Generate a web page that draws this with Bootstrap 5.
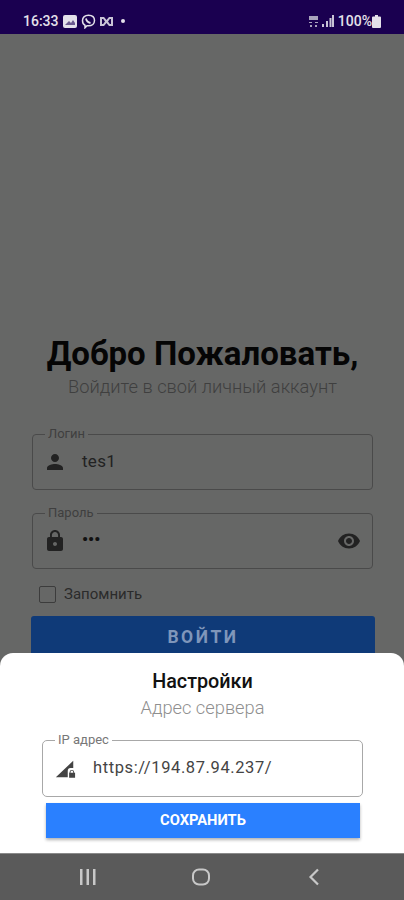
<!DOCTYPE html>
<html lang="ru">

<head>
    <meta charset="UTF-8" />
    <meta name="viewport" content="width=device-width, initial-scale=1.0" />
    <title>Настройки</title>
    <link href="https://cdn.jsdelivr.net/npm/bootstrap@5.3.0/dist/css/bootstrap.min.css" rel="stylesheet" />
    <style>
        body { font-family: Roboto, "Liberation Sans", sans-serif; background: #666766; overflow: hidden; }
        .phone { height: 900px; }
        .status-bar { height: 34px; background: #1a0050; color: #e4e1ea; font-size: 14px; font-weight: 500; padding: 8px 21px 0 23px; }
        .status-bar svg { display: block; }
        .status-right { margin-right: 2px; }
        .status-dot { margin-left: 8px; }
        .screen { background: #666766; min-height: 0; overflow: hidden; }
        .login-form { padding: 302px 31px 0 32px; }
        .login-title { font-size: 33px; font-weight: 700; color: #050505; line-height: 36px; margin: 0 -10px; white-space: nowrap; }
        .login-sub { font-size: 18.3px; font-weight: 300; color: #3f3f3f; line-height: 22px; margin: 4px 0 0; white-space: nowrap; }
        .outlined { border: 1px solid #4a4a4a; border-radius: 4px; padding: 0 11px 0 13px; margin: 0; min-width: 0; }
        .outlined legend { float: none; width: auto; font-size: 13px; line-height: 6px; height: 6px; padding: 0 3px; margin: 0 0 0 -1px; color: #3f3f3f; }
        .login-form .outlined { height: 59px; }
        .login-form .outlined + .outlined { margin-top: 20px; }
        .field-row { height: 50px; font-size: 17px; color: #222; }
        .field-text { margin-left: 15px; letter-spacing: .3px; }
        .pw-dots { font-size: 17px; line-height: 1; letter-spacing: 0; margin-left: 15px; margin-top: -3px; color: #111; font-weight: 700; }
        .remember { margin: 16px 0 0 7px; height: 18px; color: #2b2b2b; font-size: 15px; }
        .fake-check { width: 17px; height: 17px; border: 1.5px solid #3c3c3c; border-radius: 2px; margin-right: 8px; }
        .remember-label { padding-top: 1px; }
        .login-btn { display: block; width: 344px; height: 52px; margin: 13px 0 0 -1px; background: #0f3a78; color: #7f96ba; border: 0; border-radius: 3px; font-size: 17.5px; font-weight: 700; letter-spacing: 2.5px; padding: 0 0 9px; }
        .sheet { position: absolute; left: 0; right: 0; bottom: 0; height: 200px; background: #fff; border-radius: 13px 13px 0 0; padding: 18px 41px 0 42px; text-align: center; }
        .sheet-title { font-size: 19.8px; font-weight: 500; color: #111; line-height: 22px; margin: 0; }
        .sheet-sub { font-size: 18.3px; font-weight: 300; color: #8f8f8f; line-height: 22px; margin: 4px 0 0; }
        .sheet .outlined { border-color: #a8a8a8; border-radius: 5px; height: 60px; margin-top: 18px; padding-left: 13px; text-align: left; }
        .sheet .outlined legend { color: #777; }
        .sheet .field-row { height: 51px; color: #444; font-size: 16.5px; }
        .sheet .field-text { margin-left: 17px; letter-spacing: .6px; }
        .save-btn { display: block; width: 314px; height: 35px; margin: 6px 0 0 4px; background: #2a80ff; color: #fff; border: 0; border-radius: 0; font-size: 14.7px; font-weight: 700; padding: 0; box-shadow: 0 2px 3px rgba(0, 0, 0, .3); }
        .nav-bar { height: 47px; background: #5a5a5a; border-top: 1px solid #8a8a8a; flex-shrink: 0; padding: 0 84px 0 79px; }
        .nav-home { margin-left: -4px; }
    </style>
</head>

<body>

    <div class="phone d-flex flex-column">
        <div class="status-bar d-flex align-items-center justify-content-between flex-shrink-0">
            <div class="d-flex align-items-center">
                <span>16:33</span>
                <svg class="ms-1" width="14" height="13" viewBox="0 0 14 13"><rect width="14" height="13" rx="2" fill="#e4e1ea"/><path d="M2 10l4-4 2 2 2-3 2 3v2z" fill="#1a0050" opacity=".6"/></svg>
                <svg class="ms-1" width="15" height="15" viewBox="0 0 15 15" fill="none" stroke="#e4e1ea" stroke-width="1.5"><path d="M7.5 1.200c3.500 0 6 2 6 5.300s-2.500 5.300-6 5.300H6L4 13.800v-2.500C2.300 10.500 1.500 8.800 1.500 6.500c0-3.300 2.500-5.300 6-5.300z"/><path d="M5 4.500c.5 2.500 2 4 4.500 4.500" stroke-width="1.800"/></svg>
                <svg class="ms-1" width="13" height="11" viewBox="0 0 13 11" fill="#c9c4d6"><path d="M0 1h4l2.500 3L9 1h4v9H9L6.500 7 4 10H0zM2 3v5h1.200L5 5.500 3.200 3zm9 0H9.800L8 5.500 9.800 8H11z"/></svg>
                <svg class="status-dot" width="4" height="4" viewBox="0 0 4 4"><circle cx="2" cy="2" r="2" fill="#e4e1ea"/></svg>
            </div>
            <div class="status-right d-flex align-items-center">
                <svg width="9" height="11" viewBox="0 0 9 11" fill="#a9a3bd"><rect width="9" height="4"/><rect y="6" width="3" height="1"/><rect x="6" y="6" width="3" height="1"/><rect x="1" y="9" width="2" height="2"/><rect x="6" y="9" width="2" height="2"/></svg>
                <svg class="ms-1" width="12" height="12" viewBox="0 0 12 12" fill="#c9c4d6"><rect y="9" width="2" height="3"/><rect x="4" y="6" width="2" height="6"/><rect x="7.500" y="3" width="2" height="9"/><rect x="10" width="2" height="12"/></svg>
                <span class="ms-1">100%</span>
                <svg width="9" height="13" viewBox="0 0 9 13" fill="#e4e1ea"><path d="M3 0h3v1.500h2a1 1 0 0 1 1 1V12a1 1 0 0 1-1 1H1a1 1 0 0 1-1-1V2.500a1 1 0 0 1 1-1h2z"/></svg>
            </div>
        </div>

        <div class="screen flex-grow-1 position-relative">
            <form class="login-form">
                <div class="text-center">
                    <h1 class="login-title">Добро Пожаловать,</h1>
                    <p class="login-sub">Войдите в свой личный аккаунт</p>
                </div>

                <fieldset class="outlined" style="margin-top: 33px">
                    <legend>Логин</legend>
                    <div class="field-row d-flex align-items-center">
                        <svg width="24" height="24" viewBox="0 0 24 24" fill="#222" class="flex-shrink-0" style="margin-left:-3px"><path d="M12 12c2.210 0 4-1.790 4-4s-1.790-4-4-4-4 1.790-4 4 1.790 4 4 4zm0 2c-2.670 0-8 1.340-8 4v2h16v-2c0-2.660-5.330-4-8-4z"/></svg>
                        <span class="field-text">tes1</span>
                    </div>
                </fieldset>

                <fieldset class="outlined">
                    <legend>Пароль</legend>
                    <div class="field-row d-flex align-items-center">
                        <svg width="24" height="24" viewBox="0 0 24 24" fill="#222" class="flex-shrink-0" style="margin-left:-3px"><path d="M18 8h-1V6c0-2.760-2.240-5-5-5S7 3.240 7 6v2H6c-1.100 0-2 .9-2 2v10c0 1.100.9 2 2 2h12c1.100 0 2-.9 2-2V10c0-1.100-.9-2-2-2zm-6 9c-1.100 0-2-.9-2-2s.9-2 2-2 2 .9 2 2-.9 2-2 2zm3.100-9H8.900V6c0-1.710 1.390-3.100 3.100-3.100s3.100 1.390 3.100 3.100v2z"/></svg>
                        <span class="pw-dots">•••</span>
                        <svg class="ms-auto" width="24" height="24" viewBox="0 0 24 24" fill="#222"><path d="M12 4.500C7 4.500 2.730 7.610 1 12c1.730 4.390 6 7.500 11 7.500s9.270-3.110 11-7.500c-1.730-4.390-6-7.500-11-7.500zM12 17c-2.760 0-5-2.240-5-5s2.240-5 5-5 5 2.240 5 5-2.240 5-5 5zm0-8c-1.660 0-3 1.340-3 3s1.340 3 3 3 3-1.340 3-3-1.340-3-3-3z"/></svg>
                    </div>
                </fieldset>

                <div class="remember d-flex align-items-center">
                    <span class="fake-check"></span>
                    <span class="remember-label">Запомнить</span>
                </div>

                <button type="button" class="login-btn">ВОЙТИ</button>
            </form>

            <div class="sheet">
                <h2 class="sheet-title">Настройки</h2>
                <p class="sheet-sub">Адрес сервера</p>
                <fieldset class="outlined">
                    <legend>IP адрес</legend>
                    <div class="field-row d-flex align-items-center">
                        <svg width="22" height="22" viewBox="0 0 24 24" fill="#444" class="flex-shrink-0" style="margin-left:-2px"><path d="M2 21 21 3v8h-3c-2 0-3 1.500-3 3v7z"/><path d="M22 16v-.500a2.500 2.500 0 0 0-5 0v.500h-.500v5.500H23V16zm-1 0h-3v-.500a1.500 1.500 0 0 1 3 0z"/></svg>
                        <span class="field-text">https://194.87.94.237/</span>
                    </div>
                </fieldset>
                <button type="button" class="save-btn">СОХРАНИТЬ</button>
            </div>
        </div>

        <div class="nav-bar d-flex align-items-center justify-content-between">
            <svg width="18" height="16" viewBox="0 0 18 16" fill="#c8c8c8"><rect x="1" y="0" width="2.500" height="16"/><rect x="7.500" y="0" width="2.500" height="16"/><rect x="14" y="0" width="2.500" height="16"/></svg>
            <svg class="nav-home" width="20" height="18" viewBox="0 0 20 18" fill="none" stroke="#c8c8c8" stroke-width="2"><rect x="2" y="1.500" width="16" height="15" rx="6"/></svg>
            <svg width="12" height="18" viewBox="0 0 12 18" fill="none" stroke="#c8c8c8" stroke-width="2.200"><path d="M10 1.500 2.500 9l7.500 7.500"/></svg>
        </div>
    </div>

    <script src="https://cdn.jsdelivr.net/npm/bootstrap@5.3.0/dist/js/bootstrap.bundle.min.js"></script>
</body>

</html>
